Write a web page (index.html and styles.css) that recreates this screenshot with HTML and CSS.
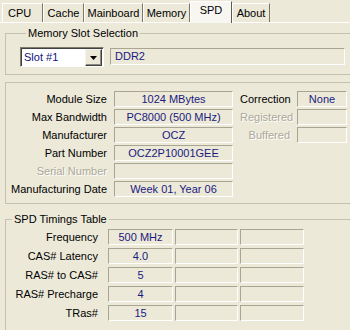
FILE: index.html
```html
<!DOCTYPE html>
<html>
<head>
<meta charset="utf-8">
<link rel="stylesheet" href="styles.css">
</head>
<body>
<div class="window">
  <div class="tabs">
    <div class="tab w-cpu">CPU</div>
    <div class="tab w-cache">Cache</div>
    <div class="tab w-main">Mainboard</div>
    <div class="tab w-mem">Memory</div>
    <div class="tab active w-spd">SPD</div>
    <div class="tab w-about">About</div>
  </div>
  <div class="panel">
    <fieldset class="group g-slot">
      <legend>Memory Slot Selection</legend>
      <div class="slot-row">
        <div class="combo">
          <span class="combo-text">Slot #1</span>
          <span class="combo-btn"><svg width="7" height="4" viewBox="0 0 7 4"><path d="M0 0h7L3.5 4z" fill="#000"/></svg></span>
        </div>
        <div class="field left type">DDR2</div>
      </div>
    </fieldset>

    <fieldset class="group g-module">
      <div class="module-grid">
        <div class="lbl">Module Size</div><div class="field">1024 MBytes</div>
        <div class="lbl">Correction</div><div class="field small">None</div>

        <div class="lbl">Max Bandwidth</div><div class="field">PC8000 (500 MHz)</div>
        <div class="lbl dis">Registered</div><div class="field small"></div>

        <div class="lbl">Manufacturer</div><div class="field">OCZ</div>
        <div class="lbl dis">Buffered</div><div class="field small"></div>

        <div class="lbl">Part Number</div><div class="field">OCZ2P10001GEE</div>
        <div></div><div></div>

        <div class="lbl dis">Serial Number</div><div class="field"></div>
        <div></div><div></div>

        <div class="lbl">Manufacturing Date</div><div class="field">Week 01, Year 06</div>
        <div></div><div></div>
      </div>
    </fieldset>

    <fieldset class="group g-timings">
      <legend>SPD Timings Table</legend>
      <div class="timing-grid">
        <div class="lbl">Frequency</div><div class="field">500 MHz</div><div class="field"></div><div class="field"></div>
        <div class="lbl">CAS# Latency</div><div class="field">4.0</div><div class="field"></div><div class="field"></div>
        <div class="lbl">RAS# to CAS#</div><div class="field">5</div><div class="field"></div><div class="field"></div>
        <div class="lbl">RAS# Precharge</div><div class="field">4</div><div class="field"></div><div class="field"></div>
        <div class="lbl">TRas#</div><div class="field">15</div><div class="field"></div><div class="field"></div>
      </div>
    </fieldset>
  </div>
</div>
</body>
</html>
```

FILE: styles.css
```css
html, body {
  margin: 0;
  padding: 0;
}
body {
  background: #ece9d8;
  font-family: "Liberation Sans", Arial, sans-serif;
  font-size: 11px;
  color: #000;
  width: 350px;
  height: 330px;
  overflow: hidden;
}
.window {
  width: 360px;
}
.tabs {
  display: flex;
  align-items: flex-end;
  height: 22px;
  padding-left: 2px;
}
.tab {
  box-sizing: border-box;
  height: 19px;
  padding-top: 3px;
  text-align: center;
  border-top: 1px solid #fff;
  border-left: 1px solid #fff;
  border-right: 1px solid #7a7868;
  line-height: 13px;
}
.tab.active {
  height: 22px;
  padding-top: 2px;
  background: #f7f6f1;
  border-right: 1px solid #5e5c50;
  margin-bottom: -1px;
  position: relative;
  z-index: 1;
}
.w-cpu { width: 41px; text-align: left; padding-left: 5px; }
.w-cache { width: 41px; }
.w-main { width: 59px; }
.w-mem { width: 47px; }
.w-spd { width: 42px; }
.w-about { width: 38px; }

.panel {
  border-top: 1px solid #fff;
  padding-left: 5px;
}
.group {
  margin: 0;
  padding: 0;
  border: 1px solid #c4c1b0;
  min-width: 0;
  width: 352px;
  box-sizing: border-box;
}
.group legend {
  padding: 0 2px;
  margin-left: 6px;
  line-height: 13px;
}
.g-slot {
  margin-top: 4px;
  padding: 7px 0 7px 14px;
}
.slot-row {
  display: flex;
  align-items: flex-start;
  gap: 6px;
}
.combo {
  box-sizing: border-box;
  width: 84px;
  height: 20px;
  background: #fff;
  border-top: 1px solid #7f7d70;
  border-left: 1px solid #7f7d70;
  border-right: 1px solid #fff;
  border-bottom: 1px solid #fff;
  box-shadow: inset 1px 1px 0 #404040;
  display: flex;
  align-items: stretch;
  padding: 1px 1px 0 2px;
}
.combo-text {
  flex: 1;
  color: #10107a;
  line-height: 17px;
  padding-left: 1px;
}
.combo-btn {
  box-sizing: border-box;
  width: 17px;
  height: 17px;
  background: #ece9d8;
  border-top: 1px solid #f4f3ec;
  border-left: 1px solid #f4f3ec;
  border-right: 1px solid #404040;
  border-bottom: 1px solid #404040;
  box-shadow: inset -1px -1px 0 #8c8a7c;
  display: flex;
  align-items: center;
  justify-content: center;
}
.field {
  box-sizing: border-box;
  height: 16px;
  line-height: 14px;
  border-top: 1px solid #a8a593;
  border-left: 1px solid #a8a593;
  border-right: 1px solid #fff;
  border-bottom: 1px solid #fff;
  color: #1a1a80;
  text-align: center;
  white-space: nowrap;
  overflow: hidden;
}
.field.left {
  text-align: left;
  padding-left: 4px;
}
.type {
  width: 235px;
  height: 17px;
  margin-top: 1px;
  line-height: 15px;
}
.g-module {
  margin-top: 7px;
  padding: 8px 0 6px 0;
}
.module-grid {
  display: grid;
  grid-template-columns: 101px 119px 50px 50px;
  grid-auto-rows: 16px;
  column-gap: 7px;
  row-gap: 2px;
}
.lbl {
  text-align: right;
  line-height: 16px;
  white-space: nowrap;
}
.lbl.dis {
  color: #aca899;
  text-shadow: 1px 1px 0 #fff;
}
.g-timings {
  margin-top: 9px;
  padding: 3px 0 20px 0;
  height: 130px;
}
.timing-grid {
  display: grid;
  grid-template-columns: 100px 65px 63px 64px;
  grid-auto-rows: 16px;
  column-gap: 2px;
  row-gap: 3px;
}
.timing-grid .lbl {
  margin-right: 8px;
}
.timing-grid .field {
  line-height: 14px;
}
```
